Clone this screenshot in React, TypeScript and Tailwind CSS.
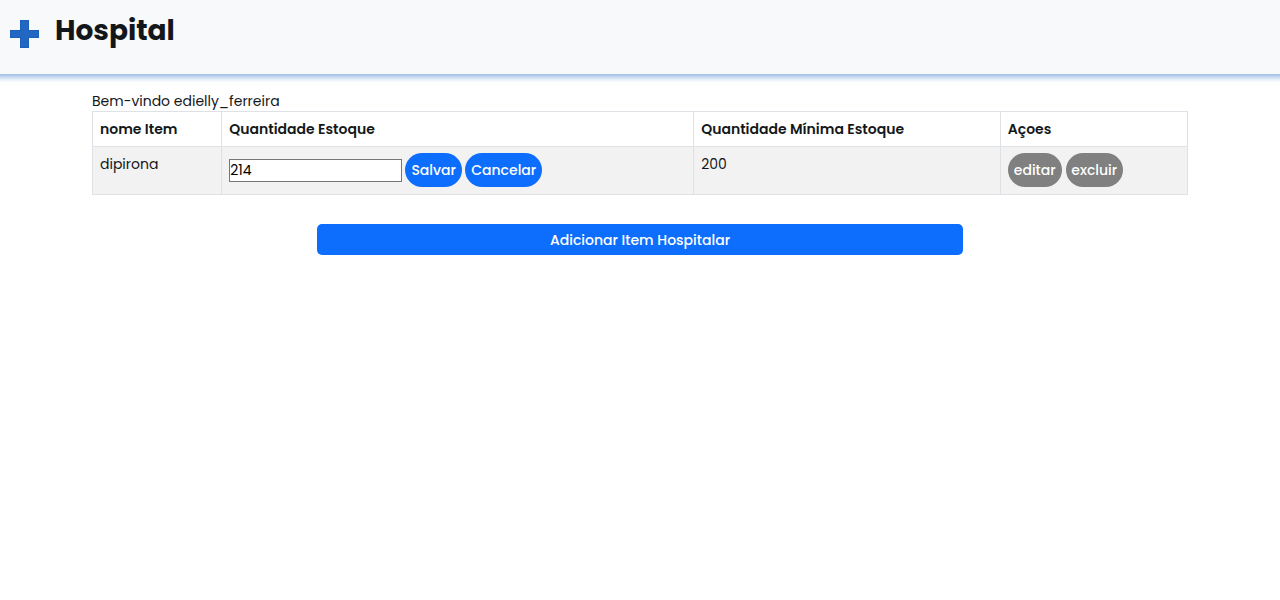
import { useState } from "react";

const pill =
  "inline-flex h-[34px] items-center justify-center rounded-[20px] font-medium text-white";
const cell = "border border-[#dee2e6] px-[7px] text-left align-top";

export default function App() {
  const [quantity, setQuantity] = useState("214");

  return (
    <div className="font-[Poppins,Inter,'Liberation_Sans',sans-serif] text-sm leading-5 text-[#14171a]">
      <header className="flex h-[74px] items-start bg-[#f8f9fa] pl-[10px] shadow-[0_-5px_6px_8px_#2268c280]">
        <svg
          className="mt-5 h-7 w-[29px]"
          viewBox="0 0 29 28"
          preserveAspectRatio="none"
          role="img"
          aria-label="Hospital"
        >
          <path d="M10 0H19V10H29V18H19V28H10V18H0V10H10Z" fill="#1c5fbd" />
          <path d="M11 1H18V11H28V17H18V27H11V17H1V11H11Z" fill="#2268c2" />
        </svg>
        <h1 className="mt-[11px] ml-4 text-[28px] leading-10 font-bold">Hospital</h1>
      </header>

      <main className="mx-[92px] pt-[17px]">
        <p>Bem-vindo edielly_ferreira</p>
        <table className="w-full table-fixed border-collapse">
          <colgroup>
            <col className="w-[11.8%]" />
            <col className="w-[43.1%]" />
            <col className="w-[28%]" />
            <col className="w-[17.1%]" />
          </colgroup>
          <thead>
            <tr className="h-[35px]">
              <th className={`${cell} py-[7px] font-semibold`}>nome Item</th>
              <th className={`${cell} py-[7px] font-semibold`}>Quantidade Estoque</th>
              <th className={`${cell} py-[7px] font-semibold`}>Quantidade Mínima Estoque</th>
              <th className={`${cell} py-[7px] font-semibold`}>Açoes</th>
            </tr>
          </thead>
          <tbody>
            <tr className="h-12 bg-[#f2f2f2]">
              <td className={`${cell} py-[7px]`}>dipirona</td>
              <td className={`${cell} py-[6px]`}>
                <div className="flex items-center gap-[3px]">
                  <input
                    type="text"
                    aria-label="Quantidade Estoque"
                    value={quantity}
                    onChange={(event) => setQuantity(event.target.value)}
                    className="h-[23px] w-[173px] border border-[#767676] bg-white text-black"
                  />
                  <button type="button" className={`${pill} w-[57px] bg-[#0d6efd]`}>
                    Salvar
                  </button>
                  <button type="button" className={`${pill} w-[77px] bg-[#0d6efd]`}>
                    Cancelar
                  </button>
                </div>
              </td>
              <td className={`${cell} py-[7px]`}>200</td>
              <td className={`${cell} py-[6px]`}>
                <div className="flex items-center gap-1">
                  <button type="button" className={`${pill} w-[54px] bg-[#808080]`}>
                    editar
                  </button>
                  <button type="button" className={`${pill} w-[57px] bg-[#808080]`}>
                    excluir
                  </button>
                </div>
              </td>
            </tr>
          </tbody>
        </table>
        <button
          type="button"
          className="mx-auto mt-[29px] block h-[31px] w-[59%] rounded-[5px] bg-[#0d6efd] font-medium text-white"
        >
          Adicionar Item Hospitalar
        </button>
      </main>
    </div>
  );
}
